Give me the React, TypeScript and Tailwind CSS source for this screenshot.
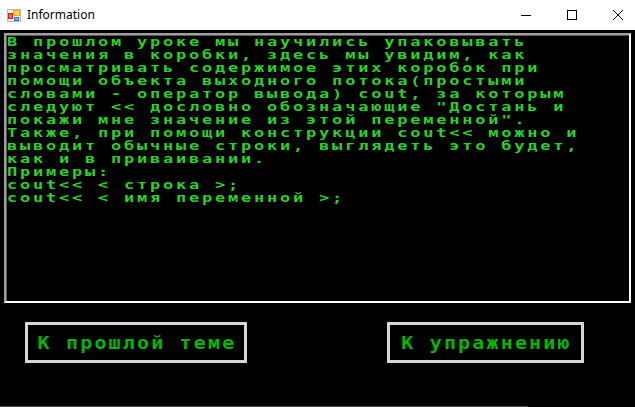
import React from "react";

const lines = [
  "В прошлом уроке мы научились упаковывать",
  "значения в коробки, здесь мы увидим, как",
  "просматривать содержимое этих коробок при",
  "помощи объекта выходного потока(простыми",
  "словами - оператор вывода) cout, за которым",
  'следуют << дословно обозначающие "Достань и',
  'покажи мне значение из этой переменной".',
  "Также, при помощи конструкции cout<< можно и",
  "выводит обычные строки, выглядеть это будет,",
  "как и в приваивании.",
  "Примеры:",
  "cout<< < строка >;",
  "cout<< < имя переменной >;",
];

const mono = { fontFamily: '"DejaVu Sans Mono", "Liberation Mono", monospace' };

function AppIcon() {
  return (
    <svg width="14" height="13" viewBox="0 0 14 13">
      <rect x="0.5" y="0.5" width="13" height="12" fill="#f0f0f0" stroke="#b8b8b8" />
      <rect x="1" y="4" width="5" height="6" fill="#d02020" />
      <rect x="2" y="5" width="3" height="4" fill="#ff6060" />
      <rect x="6" y="1" width="7" height="6" fill="#f0b000" />
      <rect x="7" y="2" width="5" height="4" fill="#ffd84a" />
      <rect x="7" y="8" width="5" height="4" fill="#3070e0" />
      <rect x="8" y="9" width="3" height="2" fill="#80b0ff" />
    </svg>
  );
}

export default function App() {
  return (
    <div className="w-[635px] h-[407px] overflow-hidden bg-black flex flex-col relative">
      {/* title bar */}
      <div className="h-[30px] bg-white flex items-center shrink-0">
        <div className="ml-[7px] mt-[1px] flex items-center">
          <AppIcon />
        </div>
        <span
          className="ml-[6px] text-[12px] text-black leading-none"
          style={{ fontFamily: '"Noto Sans", "Liberation Sans", sans-serif' }}
        >
          Information
        </span>
        <div className="ml-auto flex h-full mr-[-6px]">
          <div className="w-[46px] h-full flex items-center justify-center">
            <svg width="10" height="10" viewBox="0 0 10 10">
              <line x1="0" y1="5.5" x2="10" y2="5.5" stroke="#000" strokeWidth="1" />
            </svg>
          </div>
          <div className="w-[46px] h-full flex items-center justify-center">
            <svg width="10" height="10" viewBox="0 0 10 10">
              <rect x="0.5" y="0.5" width="9" height="9" fill="none" stroke="#000" strokeWidth="1" />
            </svg>
          </div>
          <div className="w-[46px] h-full flex items-center justify-center">
            <svg width="10" height="10" viewBox="0 0 10 10">
              <line x1="0" y1="0" x2="10" y2="10" stroke="#000" strokeWidth="1" />
              <line x1="10" y1="0" x2="0" y2="10" stroke="#000" strokeWidth="1" />
            </svg>
          </div>
        </div>
      </div>

      {/* body */}
      <div className="flex-1 flex flex-col pt-[3px]">
        <div className="ml-[4px] w-[627px] h-[270px] border-2 border-t-[#a0a0a0] border-l-[#a0a0a0] border-r-white border-b-white shadow-[inset_1px_1px_0_#5a5a5a] bg-black pt-[1px] pl-[1px]">
          <div
            className="text-[17px] leading-[13px] font-bold tracking-[2.77px] text-[#28d228]"
            style={mono}
          >
            {lines.map((l, i) => (
              <div key={i} className="whitespace-pre h-[13px]">
                <span className="inline-block scale-y-[0.72] origin-center">{l}</span>
              </div>
            ))}
          </div>
        </div>

        <div className="flex mt-[19px]">
          <div
            className="ml-[25px] w-[222px] h-[41px] border-[3px] border-[#d6d6d6] flex items-center justify-center text-[20px] leading-[20px] font-bold tracking-[2.16px] text-[#00b800]"
            style={mono}
          >
            <span className="inline-block pl-[2px] scale-y-[0.9]">К прошлой теме</span>
          </div>
          <div
            className="ml-[140px] w-[197px] h-[41px] border-[3px] border-[#d6d6d6] flex items-center justify-center text-[20px] leading-[20px] font-bold tracking-[2.16px] text-[#00b800]"
            style={mono}
          >
            <span className="inline-block pl-[2px] scale-y-[0.9]">К упражнению</span>
          </div>
        </div>
      </div>

      <div className="absolute left-0 bottom-0 w-[528px] h-[1px] bg-[#505050]" />
    </div>
  );
}
